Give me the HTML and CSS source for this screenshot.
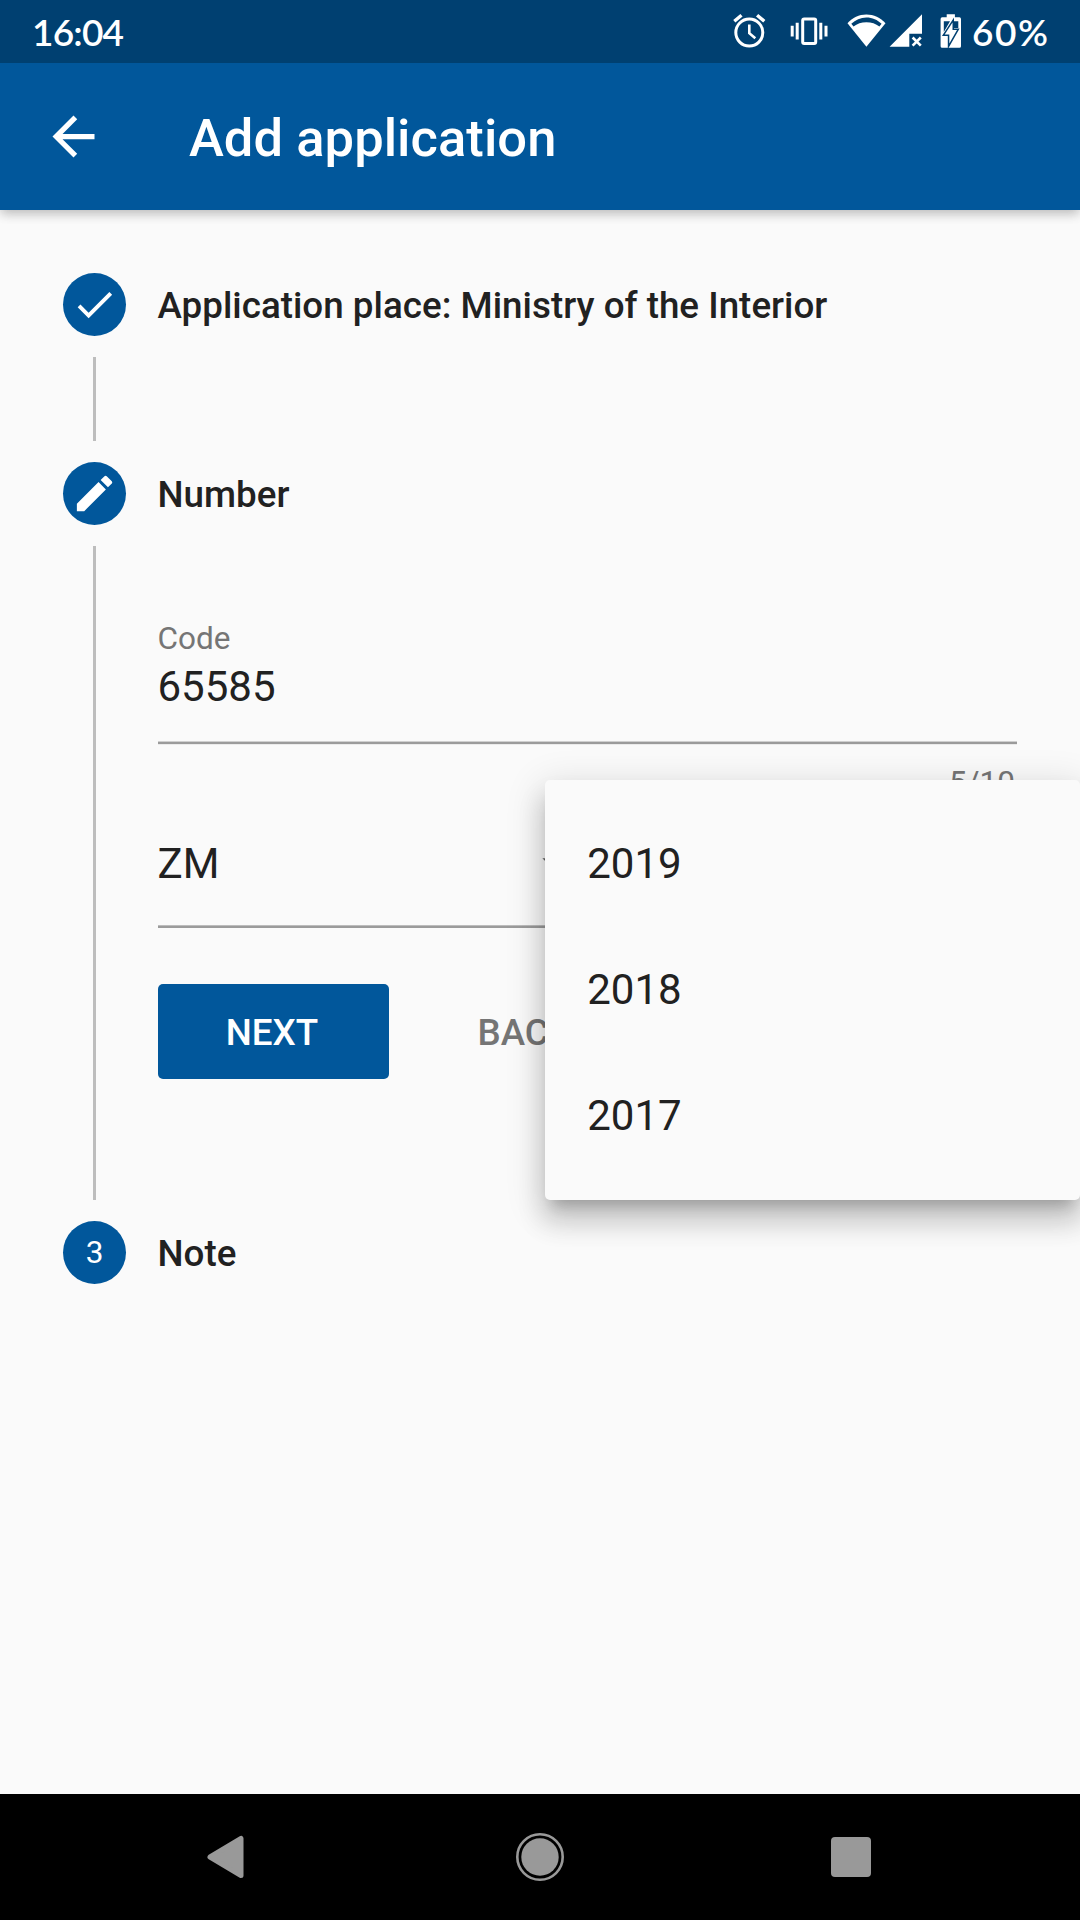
FILE: index.html
```html
<!DOCTYPE html>
<html lang="en">
<head>
<meta charset="utf-8">
<title>Add application</title>
<link rel="stylesheet" href="styles.css">
</head>
<body>
<div class="screen">
  <header class="status-bar">
    <span class="clock">16:04</span>
    <div class="status-icons">
      <svg class="icon-alarm" width="34" height="36" viewBox="732 13 34 36" fill="none" stroke="#fff">
        <circle cx="749.3" cy="32.6" r="13.5" stroke-width="3"/>
        <path d="M734.3 21.3l7.2-6.1M764.3 21.3l-7.2-6.1" stroke-width="3.4"/>
        <path d="M749.3 24.5v8.7l6 5" stroke-width="2.6"/>
      </svg>
      <svg class="icon-vibrate" width="38" height="30" viewBox="790 16 38 30" fill="none" stroke="#fff">
        <rect x="802.7" y="18.9" width="13" height="24.6" rx="1.5" stroke-width="3"/>
        <path d="M792.2 25.8v10.6M797.2 22.8v16.6M820.8 22.8v16.6M826 25.8v10.6" stroke-width="3"/>
      </svg>
      <svg class="icon-wifi" width="40" height="36" viewBox="847 13 40 36">
        <path d="M866.4 46.7L847.5 23.2C852.5 17.6 859 14.4 866.4 14.4S880.3 17.6 885.5 23.2Z" fill="#fff"/>
        <path d="M851.3 23.8C855.5 19.900 860.5 17.5 866.4 17.5S877.5 19.900 881.6 23.800L879.400 26.500C875.800 23.800 871.500 22.300 866.400 22.300S857.200 23.800 853.500 26.500Z" fill="#004071"/>
      </svg>
      <svg class="icon-signal" width="34" height="36" viewBox="889 13 34 36">
        <path d="M889.6 46.7L922 14.3V33.7H909.3V46.7Z" fill="#fff"/>
        <path d="M912.6 37.5l8.2 8.2M920.8 37.5l-8.2 8.2" stroke="#fff" stroke-width="2.6"/>
      </svg>
      <svg class="icon-battery" width="22" height="36" viewBox="940 13 22 36">
        <path d="M946.7 14.3h8.2v3h4.5q1.6 0 1.6 1.6v27.3q0 1.6-1.6 1.6h-17.200q-1.600 0-1.600-1.600v-27.300q0-1.600 1.600-1.600h4.500z" fill="#fff"/>
        <path d="M943.800 21.300H950L943.800 32ZM954 21.300H958.300V28H954Z" fill="#004071"/>
        <path d="M952.500 22.500L944.700 34.500H949.300V43.500L957 30H952.500Z" fill="#fff" stroke="#004071" stroke-width="3"/>
        <path d="M952.500 22.500L944.700 34.500H949.300V43.500L957 30H952.500Z" fill="#fff"/>
      </svg>
      <span class="battery-level">60%</span>
    </div>
  </header>

  <div class="app-bar">
    <svg class="icon-back" width="63" height="63" viewBox="0 0 24 24" fill="#fff"><path d="M20 11H7.830l5.590-5.590L12 4l-8 8 8 8 1.410-1.410L7.830 13H20v-2z"/></svg>
    <h1 class="title">Add application</h1>
  </div>

  <main class="stepper">
    <section class="step step-done">
      <div class="rail">
        <span class="bullet"><svg width="47" height="47" viewBox="0 0 24 24" fill="#fff"><path d="M9 16.170L4.830 12l-1.420 1.410L9 19 21 7l-1.410-1.410z"/></svg></span>
        <span class="connector"></span>
      </div>
      <h2 class="step-title">Application place: Ministry of the Interior</h2>
    </section>

    <section class="step step-current">
      <div class="rail">
        <span class="bullet"><svg width="47" height="47" viewBox="0 0 24 24" fill="#fff"><path d="M3 17.250V21h3.750L17.810 9.940l-3.750-3.750L3 17.250zM20.710 7.040a.996.996 0 0 0 0-1.410l-2.340-2.340a.996.996 0 0 0-1.410 0l-1.830 1.830 3.750 3.750 1.830-1.830z"/></svg></span>
        <span class="connector"></span>
      </div>
      <div class="step-body">
        <h2 class="step-title">Number</h2>
        <div class="field">
          <span class="label">Code</span>
          <span class="value">65585</span>
          <span class="rule"></span>
          <span class="counter">5/10</span>
        </div>
        <div class="selects">
          <div class="select">
            <span class="value">ZM</span>
            <svg width="63" height="63" viewBox="0 0 24 24" fill="#616161"><path d="M7 10l5 5 5-5z"/></svg>
          </div>
          <div class="select">
            <ul class="menu">
              <li>2019</li>
              <li>2018</li>
              <li>2017</li>
            </ul>
          </div>
        </div>
        <div class="actions">
          <span class="btn btn-primary">NEXT</span>
          <span class="btn btn-text">BACK</span>
        </div>
      </div>
    </section>

    <section class="step">
      <div class="rail"><span class="bullet">3</span></div>
      <h2 class="step-title">Note</h2>
    </section>
  </main>

  <nav class="nav-bar">
    <svg class="nav-back" width="48" height="48" viewBox="0 0 48 48"><path d="M11 24L42 5.500V42.500Z" fill="#999" stroke="#999" stroke-width="5" stroke-linejoin="round"/></svg>
    <svg width="48" height="48" viewBox="0 0 48 48"><circle cx="24" cy="24" r="18.700" fill="#999"/><circle cx="24" cy="24" r="22.700" fill="none" stroke="#999" stroke-width="2.600"/></svg>
    <svg width="48" height="48" viewBox="0 0 48 48"><rect x="4" y="4" width="40" height="40" rx="4" fill="#999"/></svg>
  </nav>
</div>
</body>
</html>
```
FILE: styles.css
```css
* { box-sizing: border-box; margin: 0; padding: 0; }

body {
  font-family: Roboto, sans-serif;
  color: #212121;
  background: #fafafa;
}

.screen {
  width: 1080px;
  height: 1920px;
  overflow: hidden;
  display: flex;
  flex-direction: column;
}

svg { display: block; flex: none; overflow: visible; }

/* Status bar */
.status-bar {
  height: 63px;
  flex: none;
  position: relative;
  z-index: 1;
  background: #004071;
  color: #fff;
  font: 600 37px/63px Lato, sans-serif;
  display: flex;
  justify-content: space-between;
  padding: 0 32px;
}
.clock { letter-spacing: -.8px; }
.status-icons { display: flex; height: 62px; align-items: center; }
.icon-vibrate { margin-left: 24px; }
.icon-wifi { margin-left: 19px; }
.icon-signal { margin-left: 2px; }
.icon-battery { margin-left: 17px; }
.battery-level { margin-left: 10px; width: 76px; white-space: nowrap; letter-spacing: 1.5px; }

/* App bar */
.app-bar {
  height: 147px;
  flex: none;
  background: #01579b;
  color: #fff;
  display: flex;
  align-items: center;
  padding-left: 42px;
  position: relative;
  box-shadow: 0 5px 10px -1px rgba(0,0,0,.18), 0 2px 13px 0 rgba(0,0,0,.1);
}
.title { margin-left: 84px; font-size: 52.5px; font-weight: 500; line-height: 62px; padding-top: 2px; letter-spacing: .05px; }

/* Stepper */
.stepper { flex: 1; padding: 63px 63px 0; }
.step { display: flex; gap: 31.5px; }
.step-done { height: 189px; }
.step-current { height: 758.6px; }
.rail { width: 63px; flex: none; display: flex; flex-direction: column; align-items: center; }
.bullet {
  width: 63px;
  height: 63px;
  flex: none;
  border-radius: 50%;
  background: #01579b;
  color: #fff;
  font-size: 31.5px;
  display: flex;
  align-items: center;
  justify-content: center;
}
.connector { width: 3px; flex: 1; margin: 21px 0; background: #bdbdbd; }
.step-title { font-size: 36.75px; font-weight: 500; line-height: 65px; height: 63px; white-space: nowrap; letter-spacing: .02px; }
.step-body { flex: 1; }

.field { display: flex; flex-direction: column; margin-top: 96px; }
.label { font-size: 31.5px; line-height: 36px; color: #757575; }
.value { font-size: 42px; line-height: 60px; }
.rule {
  height: 4px;
  margin-top: 24px;
  background: linear-gradient(#d0d0d0 0 1px, #9b9b9b 1px 3px, #ebebeb 3px);
}
.counter { align-self: flex-end; margin: 20px 2px 0 0; font-size: 31.5px; line-height: 36px; color: #757575; }

.selects { display: flex; }
.select {
  flex: 1;
  height: 127px;
  display: flex;
  align-items: center;
  justify-content: space-between;
  padding-bottom: 2px;
  background: linear-gradient(#bcbcbc 0 1px, #9b9b9b 1px) bottom / 100% 3px no-repeat;
  position: relative;
}

.menu {
  position: absolute;
  left: -42px;
  top: -21.4px;
  width: 535px;
  padding: 21px 42px;
  list-style: none;
  background: #fafafa;
  border-radius: 5px;
  font-size: 42px;
  line-height: 126px;
  box-shadow: 0 13px 13px -8px rgba(0,0,0,.2), 0 21px 26px 3px rgba(0,0,0,.14), 0 8px 37px 5px rgba(0,0,0,.12);
}

.actions { display: flex; margin-top: 56px; gap: 50px; }
.btn { height: 95px; font-size: 36.75px; font-weight: 500; line-height: 98px; text-align: center; }
.btn-primary { width: 231px; padding-right: 2px; background: #01579b; color: #fff; border-radius: 5px; }
.btn-text { padding: 0 39px; color: #757575; }

/* System navigation */
.nav-bar {
  height: 126px;
  flex: none;
  background: #000;
  display: flex;
  align-items: center;
  justify-content: space-between;
  padding: 0 205px 0 199px;
}
.nav-back { margin-right: 6px; }
```
